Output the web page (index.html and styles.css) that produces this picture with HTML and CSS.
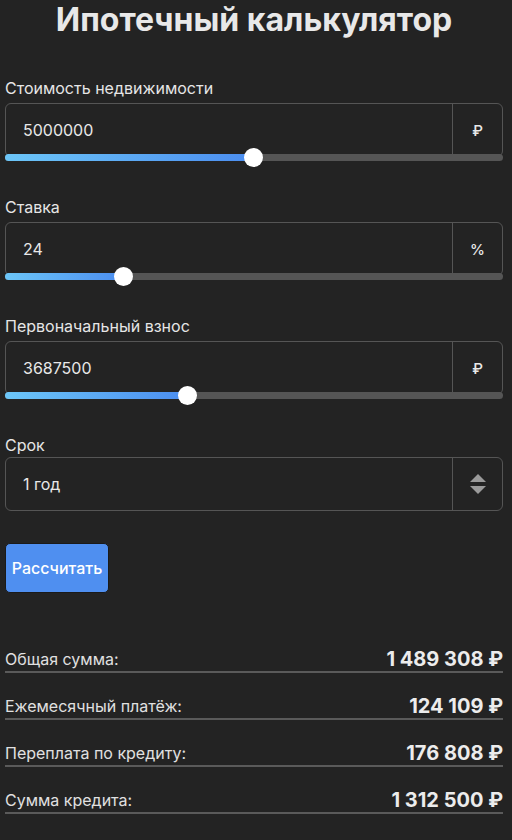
FILE: index.html
```html
<!DOCTYPE html>
<html lang="ru">
<head>
<meta charset="utf-8">
<title>Ипотечный калькулятор</title>
<link rel="stylesheet" href="styles.css">
</head>
<body>
<main class="calc">
  <h1 class="title">Ипотечный калькулятор</h1>

  <div class="field">
    <label class="label">Стоимость недвижимости</label>
    <div class="box">
      <span class="value">5000000</span>
      <span class="addon">₽</span>
    </div>
    <div class="track"><div class="fill" style="width:249px"><span class="thumb"></span></div></div>
  </div>

  <div class="field">
    <label class="label">Ставка</label>
    <div class="box">
      <span class="value">24</span>
      <span class="addon">%</span>
    </div>
    <div class="track"><div class="fill" style="width:119px"><span class="thumb"></span></div></div>
  </div>

  <div class="field">
    <label class="label">Первоначальный взнос</label>
    <div class="box">
      <span class="value">3687500</span>
      <span class="addon">₽</span>
    </div>
    <div class="track"><div class="fill" style="width:183px"><span class="thumb"></span></div></div>
  </div>

  <div class="field field-select">
    <label class="label">Срок</label>
    <div class="box">
      <span class="value">1 год</span>
      <span class="addon">
        <svg width="18" height="24" viewBox="0 0 18 24"><path d="M9 2 L17 10 H1 Z" fill="#9a9a9a"/><path d="M1 14 H17 L9 22 Z" fill="#9a9a9a"/></svg>
      </span>
    </div>
  </div>

  <button class="btn">Рассчитать</button>

  <div class="results">
    <div class="row"><span class="r-label">Общая сумма:</span><span class="r-value">1 489 308 ₽</span></div>
    <div class="row"><span class="r-label">Ежемесячный платёж:</span><span class="r-value">124 109 ₽</span></div>
    <div class="row"><span class="r-label">Переплата по кредиту:</span><span class="r-value">176 808 ₽</span></div>
    <div class="row"><span class="r-label">Сумма кредита:</span><span class="r-value">1 312 500 ₽</span></div>
  </div>
</main>
</body>
</html>
```
FILE: styles.css
```css
* { box-sizing: border-box; }
html, body { margin: 0; padding: 0; }
body {
  background: #232323;
  color: #e6e6e6;
  font-family: Inter, "Noto Sans", "DejaVu Sans", sans-serif;
}
.calc {
  width: 512px;
  padding: 0 9px 0 5px;
}
.title {
  margin: 0;
  height: 40px;
  line-height: 40px;
  font-size: 32px;
  font-weight: 700;
  text-align: center;
  color: #e8e8e8;
}
.field {
  margin-top: 39px;
}
.field + .field { margin-top: 37px; }
.label {
  display: block;
  font-size: 16px;
  line-height: 18px;
  margin-bottom: 6px;
  color: #e6e6e6;
}
.box {
  display: flex;
  height: 54px;
  border: 1px solid #555;
  border-radius: 6px;
  align-items: stretch;
}
.value {
  flex: 1;
  display: flex;
  align-items: center;
  padding-left: 17px;
  font-size: 16px;
  color: #e8e8e8;
}
.addon {
  width: 50px;
  border-left: 1px solid #555;
  display: flex;
  align-items: center;
  justify-content: center;
  font-size: 15px;
  font-weight: 500;
  color: #e8e8e8;
}
.track {
  margin-top: -3px;
  height: 7px;
  border-radius: 4px;
  background: #555;
}
.fill {
  position: relative;
  height: 100%;
  border-radius: 4px;
  background: linear-gradient(90deg, #6cc6f8, #4b8df0);
}
.thumb {
  position: absolute;
  right: -9px;
  top: -6px;
  width: 19px;
  height: 19px;
  border-radius: 50%;
  background: #fff;
}
.field-select .label { margin-bottom: 3px; }
.btn {
  display: block;
  margin-top: 32px;
  width: 104px;
  height: 50px;
  border: 1px solid #1a1a1a;
  border-radius: 5px;
  background: #4f8ff0;
  color: #fff;
  font-family: inherit;
  font-size: 16px;
  font-weight: 500;
  padding: 0;
}
.results {
  margin-top: 54px;
}
.row {
  display: flex;
  justify-content: space-between;
  align-items: center;
  height: 24px;
  line-height: 24px;
  border-bottom: 2px solid #5a5a5a;
  margin-bottom: 21px;
  box-sizing: content-box;
}
.r-label {
  font-size: 16px;
  color: #e0e0e0;
}
.r-value {
  font-size: 20px;
  font-weight: 700;
  color: #ececec;
}
```
